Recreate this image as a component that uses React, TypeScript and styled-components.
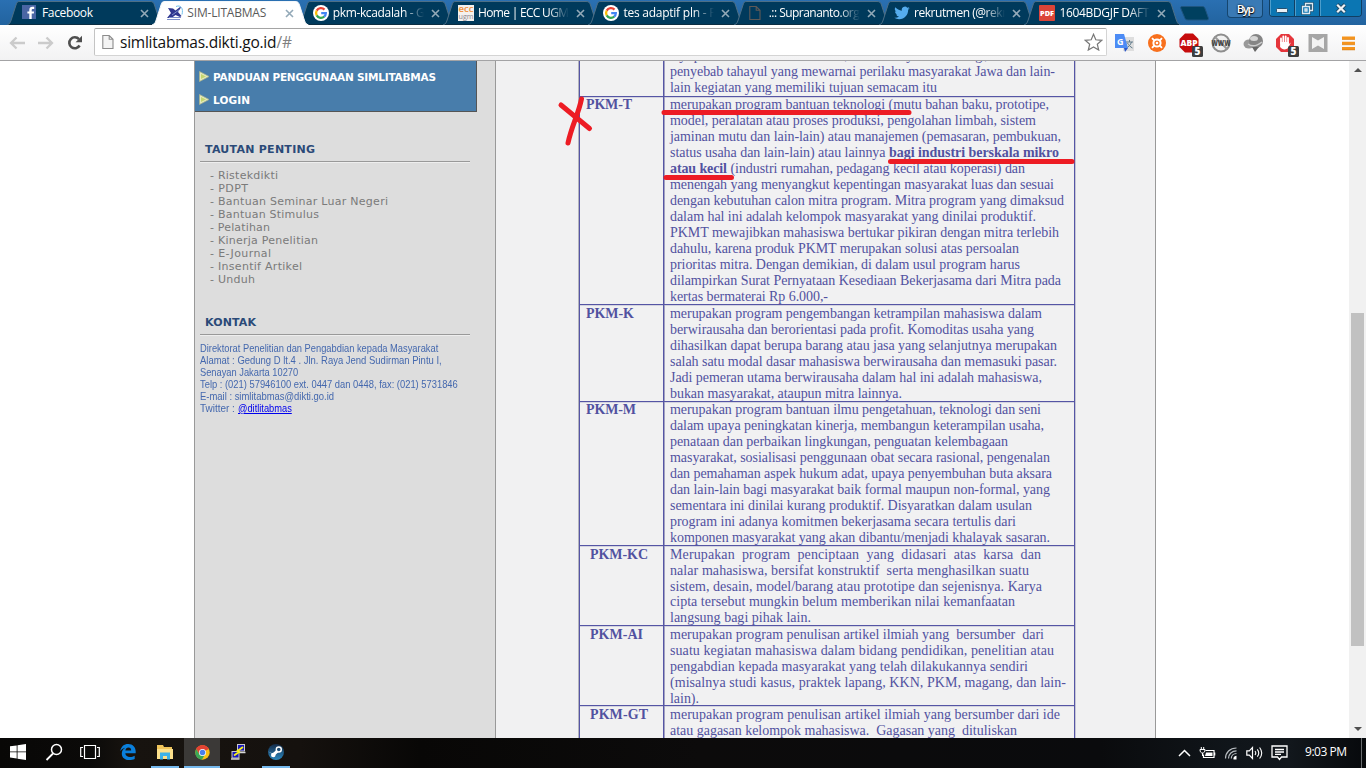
import React, { useLayoutEffect, useRef, useState } from "react";
import styled, { createGlobalStyle } from "styled-components";

const GlobalStyle = createGlobalStyle`
  * { box-sizing: border-box; }
  html, body { margin: 0; padding: 0; overflow: hidden; background: #fff; }
  svg { display: block; }
`;

/* ---------- text set to a fixed measure ---------- */

const Measure = styled.span<{ $w: number; $bold?: boolean }>`
  display: inline-block;
  width: ${(p) => p.$w}px;
  white-space: pre;
  font-weight: ${(p) => (p.$bold ? 700 : "inherit")};
`;

function Fit({ text, w, bold }: { text: string; w: number; bold?: boolean }) {
  const ref = useRef<HTMLSpanElement>(null);
  const [gap, setGap] = useState(0);
  useLayoutEffect(() => {
    if (!ref.current) return;
    const natural = ref.current.getBoundingClientRect().width;
    setGap((w - natural) / Math.max(1, text.length - 1));
  }, [text, w]);
  return (
    <Measure $w={w} $bold={bold}>
      <span ref={ref} style={{ letterSpacing: gap }}>{text}</span>
    </Measure>
  );
}

const CondensedText = styled.span`
  display: inline-block;
  transform-origin: 0 50%;
`;

function Condensed({ text, w }: { text: string; w: number }) {
  const ref = useRef<HTMLSpanElement>(null);
  const [scale, setScale] = useState(1);
  useLayoutEffect(() => {
    if (ref.current) setScale(w / ref.current.offsetWidth);
  }, [text, w]);
  return (
    <Measure $w={w}>
      <CondensedText ref={ref} style={{ transform: `scaleX(${scale})` }}>{text}</CondensedText>
    </Measure>
  );
}

/* ---------- window ---------- */

const Screen = styled.div`
  width: 1366px;
  height: 768px;
  display: flex;
  flex-direction: column;
  overflow: hidden;
  background: #fff;
`;

const TabStrip = styled.div`
  height: 25px;
  flex: none;
  display: flex;
  padding-left: 7px;
  background: linear-gradient(#2a70b2, #22639f);
  font: 12px "Open Sans", "Noto Sans", sans-serif;
`;

const TabBox = styled.div<{ $active?: boolean }>`
  position: relative;
  z-index: ${(p) => (p.$active ? 2 : 1)};
  width: 145.35px;
  height: 25px;
  flex: none;
  display: flex;
  align-items: center;
  padding: 1px 0 0 15px;
  color: ${(p) => (p.$active ? "#5a5a5a" : "#fff")};
`;

const TabShape = styled.svg`
  position: absolute;
  left: 0;
  top: 0;
  z-index: -1;
`;

const TabTitle = styled.div<{ $fade: boolean }>`
  width: 94px;
  margin-left: 4px;
  overflow: hidden;
  white-space: nowrap;
  line-height: 18px;
  mask-image: ${(p) => (p.$fade ? "linear-gradient(90deg, #000 70px, transparent 91px)" : "none")};
`;

const Favicon = styled.div`
  width: 16px;
  height: 16px;
  flex: none;
`;

const CloseGlyph = styled.svg`
  flex: none;
  margin-left: 4px;
`;

const NewTab = styled.svg`
  flex: none;
  margin: 5px 0 0 8px;
`;

const WindowButtons = styled.div`
  display: flex;
  margin-left: auto;
  padding-right: 4px;
`;

const UserButton = styled.div`
  width: 36px;
  height: 18px;
  margin-right: 6px;
  border: 1px solid #15466f;
  border-top: 0;
  border-radius: 0 0 4px 4px;
  background: #3a7ab5;
  color: #fff;
  text-align: center;
  line-height: 18px;
  font-size: 11.5px;
  font-weight: 600;
  text-shadow: 0 0 2px #000, 0 1px 1px #000;
`;

const ButtonGroup = styled.div`
  display: flex;
  height: 17px;
  border: 1px solid #103f63;
  border-top: 0;
  border-radius: 0 0 4px 4px;
  overflow: hidden;
`;

const WinButton = styled.div<{ $w: number; $drop?: number }>`
  width: ${(p) => p.$w}px;
  padding-top: ${(p) => p.$drop ?? 0}px;
  display: flex;
  align-items: center;
  justify-content: center;
  background: #0b76b3;
  border-right: 1px solid #103f63;
  box-shadow: inset 1px 0 #4c9dcb;
  &:last-child { border-right: 0; }
`;

const Toolbar = styled.div`
  position: relative;
  z-index: 3;
  height: 36px;
  flex: none;
  display: flex;
  align-items: center;
  padding-left: 9px;
  background: linear-gradient(#fff, #f2f2f3);
  border-bottom: 1px solid #a3a3a5;
`;

const NavIcon = styled.svg<{ $gap?: number }>`
  flex: none;
  margin-right: ${(p) => p.$gap ?? 13}px;
`;

const Omnibox = styled.div`
  width: 1013px;
  height: 28px;
  margin-top: -1px;
  display: flex;
  align-items: center;
  padding: 0 3px 0 7px;
  border: 1px solid #d4d4d4;
  border-top-color: #a4a4a4;
  border-left-color: #c4c4c4;
  border-radius: 2px;
  background: #fff;
  font: 15.5px "Open Sans", "Noto Sans", sans-serif;
  color: #111;
`;

const Address = styled.div`
  flex: 1;
  padding-left: 6px;
  line-height: 22px;
`;

const Muted = styled.span`
  color: #808080;
`;

const Extensions = styled.div`
  flex: 1;
  display: flex;
  align-items: center;
  padding-left: 6px;
  gap: 10.3px;
  svg { overflow: visible; flex: none; }
`;

/* ---------- page ---------- */

const Viewport = styled.div`
  height: 677px;
  flex: none;
  display: flex;
  overflow: hidden;
  background: #fff;
`;

const Page = styled.div`
  width: 962px;
  margin-left: 194px;
  display: flex;
  border-left: 1px solid #999;
  border-right: 1px solid #999;
  background: #f1f1f2;
`;

const Sidebar = styled.div`
  width: 301px;
  flex: none;
  background: #ddd;
  border-right: 1px solid #999;
`;

const Menu = styled.div`
  width: 282px;
  height: 51px;
  padding: 4px 0 0 4px;
  background: #487dab;
  border: 1px solid #555;
  border-top: 0;
  border-left: 0;
  font: 700 10.5px "DejaVu Sans", sans-serif;
  color: #fff;
`;

const MenuItem = styled.div`
  height: 23px;
  display: flex;
  align-items: center;
  gap: 4px;
`;

const Heading = styled.div<{ $top: number }>`
  margin: ${(p) => p.$top}px 25px 0 5px;
  height: 19px;
  padding-left: 5px;
  font: 700 11px/14px "DejaVu Sans", sans-serif;
  color: #2b4a78;
  border-bottom: 1px solid #999;
  box-shadow: 0 1px #eee;
`;

const Links = styled.div`
  margin: 7px 0 0 15px;
  font: 11px/13px "DejaVu Sans", sans-serif;
  color: #7a7a7a;
`;

const Contact = styled.div`
  margin: 7px 0 0 5px;
  font: 11px/12px "Liberation Sans", sans-serif;
  color: #4468ae;
`;

const Handle = styled.span`
  color: #0000ee;
  span span { text-decoration: underline; }
`;

const ContactLine = styled.div`
  height: 12px;
  white-space: nowrap;
`;

const LinkLine = styled.div`
  height: 13px;
  white-space: nowrap;
`;

const Main = styled.div`
  position: relative;
  flex: 1;
  overflow: hidden;
  padding-left: 83px;
`;

const Table = styled.div`
  width: 496px;
  margin-top: -13px;
  border-left: 1px solid #5555a5;
  border-right: 1px solid #5555a5;
  box-shadow: -1px 0 #b4b4bd, 1px 0 #c6c6d4;
  font: 14px "Liberation Serif", serif;
  color: #5151a0;
`;

const TRow = styled.div<{ $h: number }>`
  display: flex;
  height: ${(p) => p.$h}px;
  border-bottom: 1px solid #5555a5;
  box-shadow: 0 1px #d3d3df;
`;

const LabelCell = styled.div<{ $indent: number; $pad: number }>`
  width: 84px;
  flex: none;
  padding: ${(p) => p.$pad}px 0 0 ${(p) => p.$indent}px;
  line-height: 16px;
  border-right: 1px solid #5555a5;
  box-shadow: 1px 0 #a2a2c0;
`;

const TextCell = styled.div<{ $lh: number; $pad: number }>`
  padding: ${(p) => p.$pad}px 0 0 6px;
  line-height: ${(p) => p.$lh}px;
  & > div { height: ${(p) => p.$lh}px; white-space: nowrap; }
`;

const Marks = styled.svg`
  position: absolute;
  left: 0;
  top: 0;
  pointer-events: none;
`;

const ScrollTrack = styled.div`
  width: 17px;
  margin-left: auto;
  display: flex;
  flex-direction: column;
  align-items: center;
  padding: 7px 0;
  background: #f1f1f1;
`;

const ScrollThumb = styled.div`
  width: 13px;
  height: 333px;
  margin: 241px 0 auto;
  background: #c1c1c1;
`;

/* ---------- taskbar ---------- */

const Taskbar = styled.div`
  height: 30px;
  flex: none;
  display: flex;
  background: linear-gradient(90deg, #080706 0, #0b0a09 90px, #17130f 130px, #15110e 300px, #080706 420px, #0c0b0b 700px, #0a0b0d 1100px, #10151a 1230px, #12171c 1290px, #07090c 1366px);
`;

const TaskItem = styled.div<{ $w: number; $open?: boolean; $focus?: boolean }>`
  width: ${(p) => p.$w}px;
  height: 30px;
  flex: none;
  display: flex;
  align-items: center;
  justify-content: center;
  background: ${(p) => (p.$focus ? "#3b3937" : "transparent")};
  border-bottom: 2px solid ${(p) => (p.$open ? "#76b9ed" : "transparent")};
`;

const Spacer = styled.div<{ $w: number }>`
  width: ${(p) => p.$w}px;
  flex: none;
`;

const Tray = styled.div`
  margin-left: auto;
  display: flex;
  align-items: center;
  padding-right: 4px;
  color: #fff;
  font: 12px "Open Sans", "Noto Sans", sans-serif;
`;

const TrayIcon = styled.svg<{ $gap?: number }>`
  flex: none;
  margin-right: ${(p) => p.$gap ?? 8}px;
`;

const Clock = styled.div`
  padding-bottom: 3px;
`;

const DesktopEdge = styled.div`
  width: 1px;
  height: 30px;
  margin-left: 14px;
  background: #686b6e;
`;

/* ---------- icons ---------- */

const GoogleIcon = () => (
  <svg width="16" height="16" viewBox="0 0 16 16">
    <circle cx="8" cy="8" r="8" fill="#fff" />
    <g fill="none" strokeWidth="2.3">
      <path d="M11.5 4.6A4.9 4.9 0 0 0 3.7 5.6" stroke="#ea4335" />
      <path d="M3.7 5.6a4.9 4.9 0 0 0 0 4.8" stroke="#fbbc05" />
      <path d="M3.7 10.4a4.9 4.9 0 0 0 7.6 1.1" stroke="#34a853" />
      <path d="M11.2 11.6A4.7 4.7 0 0 0 12.8 8.2H8.2" stroke="#4285f4" />
    </g>
  </svg>
);

const FacebookIcon = () => (
  <svg width="14" height="14" viewBox="0 0 14 14">
    <rect width="14" height="14" fill="#4a66a4" />
    <path d="M7.3 14V8.6H5.4V6.4h1.9V4.9c0-2 1.2-3.1 3-3.1h1.9V4h-1.3c-.9 0-1.2.4-1.2 1.2v1.2h2.4l-.3 2.2H9.7V14z" fill="#fff" />
  </svg>
);

const SimIcon = () => (
  <svg width="16" height="16" viewBox="0 0 16 16">
    <path d="M1 3l5 .5 2.500 2L13 2l1 .5L11 7l3.500 4-1.500 1-4.500-2-4 3H0l4-5z" fill="#30378f" />
    <path d="M0 14.500h13M2 12.500h12M5 10l7-5" stroke="#7c8fcb" fill="none" />
    <path d="M9 1.500c5-2 7.500 2 6 8" stroke="#6fbfea" fill="none" />
  </svg>
);

const EccIcon = () => (
  <svg width="16" height="16" viewBox="0 0 16 16">
    <rect width="16" height="16" fill="#f4f1ee" />
    <text x="0.5" y="7" fontFamily="Open Sans, sans-serif" fontSize="9" fontWeight="600" fill="#f0913c" textLength="15" lengthAdjust="spacingAndGlyphs">ecc</text>
    <text x="0.5" y="13.800" fontFamily="Open Sans, sans-serif" fontSize="7.5" fill="#8b8790" textLength="15" lengthAdjust="spacingAndGlyphs">ugm</text>
  </svg>
);

const PageIcon = ({ dark }: { dark?: boolean }) => (
  <svg width="12" height="16" viewBox="0 0 12 16">
    <path d="M.8 1.5h6.4L11 5.3v9.2H.8zM7.2 1.5v3.8H11" fill={dark ? "none" : "#f4f4f4"} stroke={dark ? "#5f5a57" : "#8c8c8c"} strokeWidth="1.1" />
  </svg>
);

const TwitterIcon = () => (
  <svg width="16" height="16" viewBox="0 0 24 24">
    <path d="M23.6 4.9a9.700 9.700 0 0 1-2.700.8 4.700 4.700 0 0 0 2-2.600c-.9.500-1.900.9-3 1.100a4.700 4.700 0 0 0-8.100 4.300C7.900 8.300 4.400 6.400 2 3.500a4.700 4.700 0 0 0 1.500 6.300c-.8 0-1.500-.2-2.100-.6 0 2.300 1.600 4.200 3.800 4.700-.7.200-1.400.2-2.100.1a4.700 4.700 0 0 0 4.400 3.300A9.500 9.500 0 0 1 .4 19.200a13.400 13.400 0 0 0 7.300 2.100c8.700 0 13.800-7.400 13.500-14.000.9-.7 1.700-1.500 2.400-2.400z" fill="#55acee" />
  </svg>
);

const PdfIcon = () => (
  <svg width="16" height="16" viewBox="0 0 16 16">
    <rect width="16" height="16" rx="1" fill="#db4437" />
    <text x="1" y="11" fontFamily="Open Sans, sans-serif" fontSize="7.5" fontWeight="800" fill="#fff" textLength="14" lengthAdjust="spacingAndGlyphs">PDF</text>
  </svg>
);

const Close = () => (
  <CloseGlyph width="9" height="9" viewBox="0 0 9 9">
    <path d="M1 1l7 7M8 1L1 8" stroke="#93a9b8" strokeWidth="1.6" />
  </CloseGlyph>
);

type TabData = { icon: React.ReactNode; title: string; w: number; active?: boolean; fade?: boolean };

const tabs: TabData[] = [
  { icon: <FacebookIcon />, title: "Facebook", w: 51 },
  { icon: <SimIcon />, title: "SIM-LITABMAS", w: 79, active: true },
  { icon: <GoogleIcon />, title: "pkm-kcadalah - G", w: 92, fade: true },
  { icon: <EccIcon />, title: "Home | ECC UGM", w: 91, fade: true },
  { icon: <GoogleIcon />, title: "tes adaptif pln - P", w: 93, fade: true },
  { icon: <PageIcon dark />, title: ".:: Suprananto.org", w: 91, fade: true },
  { icon: <TwitterIcon />, title: "rekrutmen (@rekr", w: 93, fade: true },
  { icon: <PdfIcon />, title: "1604BDGJF DAFT", w: 90, fade: true },
];

const Tab = ({ icon, title, w, active, fade }: TabData) => (
  <TabBox $active={active}>
    <TabShape width="158" height="25" viewBox="0 0 158 25">
      <path
        d="M0 25C3 24 3.500 22 4.500 19L9 5C10 2 10.500 1.500 13 1.500H143C146 1.500 146.500 2.500 147.500 5L152 19C153 22 153.500 24 156.500 25"
        fill={active ? "#fff" : "#003a5c"}
        stroke={active ? "#f4f7fa" : "#4d6f86"}
      />
      {!active && <path d="M2 24.500H155" stroke="#0b2d42" />}
    </TabShape>
    <Favicon>{icon}</Favicon>
    <TabTitle $fade={!!fade}><Fit text={title} w={w} /></TabTitle>
    <Close />
  </TabBox>
);

const Badge = ({ x, y }: { x: number; y: number }) => (
  <g transform={`translate(${x} ${y})`}>
    <rect width="11" height="11" rx="1.500" fill="#3e3e3e" />
    <text x="2.600" y="9" fontFamily="Open Sans, sans-serif" fontSize="10" fontWeight="800" fill="#fff">5</text>
  </g>
);

const ExtensionIcons = () => (
  <Extensions>
    <svg width="22" height="22" viewBox="0 0 22 22">
      <rect x="10" y="5" width="11" height="14" fill="#dedede" />
      <path d="M13 10h7M16.500 8v2M18.500 10c-1 3-3 5-5 6M14.500 11c1 2 3 4 5 5" stroke="#607b8b" fill="none" />
      <path d="M2 2h9l4 14H2z" fill="#4c8bf5" />
      <path d="M11 16h4l-3 4z" fill="#2a56c6" />
      <text x="4" y="12.500" fontFamily="Open Sans, sans-serif" fontSize="9" fontWeight="700" fill="#fff">G</text>
    </svg>
    <svg width="22" height="22" viewBox="0 0 22 22">
      <circle cx="12" cy="11" r="9" fill="#f8701d" />
      <circle cx="12" cy="11" r="3.600" fill="none" stroke="#fff" strokeWidth="2" />
      <circle cx="12" cy="11" r="1.300" fill="#fff" />
      <path d="M7 6.200l2.300 2.300M17 6.200l-2.300 2.300M7 15.800l2.300-2.300M17 15.800l-2.300-2.300" stroke="#fff" strokeWidth="1.800" />
    </svg>
    <svg width="22" height="22" viewBox="0 0 22 22">
      <path d="M7 1.500h8l5.500 5.500v8L15 20.500H7L1.500 15V7z" fill="#c60c0d" />
      <text x="2.500" y="13.700" fontFamily="Open Sans, sans-serif" fontSize="9" fontWeight="800" fill="#fff" textLength="17" lengthAdjust="spacingAndGlyphs">ABP</text>
      <Badge x={14} y={14} />
    </svg>
    <svg width="22" height="22" viewBox="0 0 22 22">
      <circle cx="11" cy="11" r="8.500" fill="#f1f1f1" stroke="#8e8e8e" strokeWidth="2" />
      <path d="M5 5l12 12" stroke="#9a9a9a" strokeWidth="2" />
      <text x="1.500" y="14" fontFamily="Open Sans, sans-serif" fontSize="9" fontWeight="800" fill="#444" textLength="19" lengthAdjust="spacingAndGlyphs">WWW</text>
    </svg>
    <svg width="22" height="22" viewBox="0 0 22 22">
      <ellipse cx="7" cy="12" rx="5.500" ry="4.500" fill="#999" />
      <circle cx="14" cy="9" r="7" fill="#858585" />
      <ellipse cx="12" cy="6.500" rx="4" ry="2.500" fill="#d6d6d6" />
      <path d="M6 12c4 3 9 2 14-2" stroke="#ccc" strokeWidth="1.500" fill="none" />
      <path d="M10 15h7l-4 5z" fill="#666" />
    </svg>
    <svg width="22" height="22" viewBox="0 0 22 22">
      <path d="M7 2h8l5 5v8l-5 5H7l-5-5V7z" fill="#e5363c" />
      <path d="M7 11V6.500M9.300 10V4.500M11.700 10V4.500M14 11V6" stroke="#fff" strokeWidth="1.800" strokeLinecap="round" />
      <path d="M6.100 10h8.800v2l2-1.500-2.800 5.500c-2 2-6 2-8-1z" fill="#fff" />
      <Badge x={14} y={14} />
    </svg>
    <svg width="22" height="22" viewBox="0 0 22 22">
      <rect x="1.500" y="2" width="19" height="18" fill="#a6a6a6" />
      <path d="M5 5l6 3.500L17 5v12l-6-3.500L5 17z" fill="#f2f2f2" />
    </svg>
    <svg width="20" height="22" viewBox="0 0 20 22">
      <path d="M3 6h13M3 11.200h13M3 16.400h13" stroke="#f5941d" strokeWidth="3" />
      <path d="M3 7.500h13M3 12.700h13M3 17.900h13" stroke="#d97e12" strokeWidth=".6" />
    </svg>
  </Extensions>
);

const Arrow = () => (
  <svg width="10" height="11" viewBox="0 0 10 11">
    <path d="M.5.5v10L10 5.500z" fill="#e6ecbf" stroke="#a9b38c" strokeWidth=".8" />
    <path d="M2 3v5l5-2.500z" fill="#c4d670" />
  </svg>
);

const Chrome = () => (
  <svg width="15" height="15" viewBox="0 0 15 15">
    <circle cx="7.500" cy="7.500" r="7.200" fill="#fbc116" />
    <path d="M7.500 7.500L1.200 3.900A7.200 7.200 0 0 1 13.800 3.900z" fill="#e24233" />
    <path d="M7.500 4h6.300A7.200 7.200 0 0 0 1.200 4l3.200 5.300z" fill="#e24233" />
    <path d="M1.200 4a7.200 7.200 0 0 0 5.700 10.700L10 9.500H4.500z" fill="#3aa757" />
    <circle cx="7.500" cy="7.500" r="3.500" fill="#fff" />
    <circle cx="7.500" cy="7.500" r="2.800" fill="#4a80ee" />
  </svg>
);

/* ---------- content ---------- */

type Seg = [string, number, boolean?];
type RowData = { label: string; lw?: number; indent: number; h: number; lh: number; pad: number; lines: Seg[][] };

const rows: RowData[] = [
  {
    label: "", indent: 6, h: 49, lh: 16, pad: 0,
    lines: [
      [["raya pikir dan cara-cara di masa lalu, tradisi budaya atau mitologi,", 318]],
      [["penyebab tahayul yang mewarnai perilaku masyarakat Jawa dan lain-", 385]],
      [["lain kegiatan yang memiliki tujuan semacam itu", 267]],
    ],
  },
  {
    label: "PKM-T", lw: 46, indent: 6, h: 208, lh: 15.96, pad: 0.4,
    lines: [
      [["merupakan program bantuan teknologi (mutu bahan baku, prototipe,", 379]],
      [["model, peralatan atau proses produksi, pengolahan limbah, sistem", 366]],
      [["jaminan mutu dan lain-lain) atau manajemen (pemasaran, pembukuan,", 391]],
      [["status usaha dan lain-lain) atau lainnya ", 219], ["bagi industri berskala mikro", 170, true]],
      [["atau kecil", 57, true], [" (industri rumahan, pedagang kecil atau koperasi) dan", 298]],
      [["menengah yang menyangkut kepentingan masyarakat luas dan sesuai", 384]],
      [["dengan kebutuhan calon mitra program. Mitra program yang dimaksud", 394]],
      [["dalam hal ini adalah kelompok masyarakat yang dinilai produktif.", 366]],
      [["PKMT mewajibkan mahasiswa bertukar pikiran dengan mitra terlebih", 389]],
      [["dahulu, karena produk PKMT merupakan solusi atas persoalan", 349]],
      [["prioritas mitra. Dengan demikian, di dalam usul program harus", 350]],
      [["dilampirkan Surat Pernyataan Kesediaan Bekerjasama dari Mitra pada", 391]],
      [["kertas bermaterai Rp 6.000,-", 158]],
    ],
  },
  {
    label: "PKM-K", lw: 48, indent: 6, h: 97, lh: 16, pad: 1,
    lines: [
      [["merupakan program pengembangan ketrampilan mahasiswa dalam", 372]],
      [["berwirausaha dan berorientasi pada profit. Komoditas usaha yang", 364]],
      [["dihasilkan dapat berupa barang atau jasa yang selanjutnya merupakan", 387]],
      [["salah satu modal dasar mahasiswa berwirausaha dan memasuki pasar.", 387]],
      [["Jadi pemeran utama berwirausaha dalam hal ini adalah mahasiswa,", 372]],
      [["bukan masyarakat, ataupun mitra lainnya.", 232]],
    ],
  },
  {
    label: "PKM-M", lw: 50, indent: 6, h: 144, lh: 15.97, pad: 0,
    lines: [
      [["merupakan program bantuan ilmu pengetahuan, teknologi dan seni", 371]],
      [["dalam upaya peningkatan kinerja, membangun keterampilan usaha,", 374]],
      [["penataan dan perbaikan lingkungan, penguatan kelembagaan", 338]],
      [["masyarakat, sosialisasi penggunaan obat secara rasional, pengenalan", 380]],
      [["dan pemahaman aspek hukum adat, upaya penyembuhan buta aksara", 382]],
      [["dan lain-lain bagi masyarakat baik formal maupun non-formal, yang", 380]],
      [["sementara ini dinilai kurang produktif. Disyaratkan dalam usulan", 362]],
      [["program ini adanya komitmen bekerjasama secara tertulis dari", 346]],
      [["komponen masyarakat yang akan dibantu/menjadi khalayak sasaran.", 380]],
    ],
  },
  {
    label: "PKM-KC", lw: 58, indent: 10, h: 80, lh: 15.9, pad: 0.8,
    lines: [
      [["Merupakan  program  penciptaan  yang  didasari  atas  karsa  dan", 371]],
      [["nalar mahasiswa, bersifat konstruktif  serta menghasilkan suatu", 359]],
      [["sistem, desain, model/barang atau prototipe dan sejenisnya. Karya", 372]],
      [["cipta tersebut mungkin belum memberikan nilai kemanfaatan", 345]],
      [["langsung bagi pihak lain.", 141]],
    ],
  },
  {
    label: "PKM-AI", lw: 53, indent: 10, h: 80, lh: 16, pad: 1,
    lines: [
      [["merupakan program penulisan artikel ilmiah yang  bersumber  dari", 374]],
      [["suatu kegiatan mahasiswa dalam bidang pendidikan, penelitian atau", 384]],
      [["pengabdian kepada masyarakat yang telah dilakukannya sendiri", 358]],
      [["(misalnya studi kasus, praktek lapang, KKN, PKM, magang, dan lain-", 396]],
      [["lain).", 29]],
    ],
  },
  {
    label: "PKM-GT", lw: 58, indent: 10, h: 80, lh: 16, pad: 1,
    lines: [
      [["merupakan program penulisan artikel ilmiah yang bersumber dari ide", 390]],
      [["atau gagasan kelompok mahasiswa.  Gagasan yang  dituliskan", 347]],
    ],
  },
];

const links: [string, number][] = [
  ["- Ristekdikti", 68],
  ["- PDPT", 38],
  ["- Bantuan Seminar Luar Negeri", 178],
  ["- Bantuan Stimulus", 109],
  ["- Pelatihan", 60],
  ["- Kinerja Penelitian", 108],
  ["- E-Journal", 61],
  ["- Insentif Artikel", 92],
  ["- Unduh", 45],
];

const contact: [string, number][] = [
  ["Direktorat Penelitian dan Pengabdian kepada Masyarakat", 238],
  ["Alamat : Gedung D lt.4 . Jln. Raya Jend Sudirman Pintu I,", 242],
  ["Senayan Jakarta 10270", 98],
  ["Telp : (021) 57946100 ext. 0447 dan 0448, fax: (021) 5731846", 258],
  ["E-mail : simlitabmas@dikti.go.id", 134],
];

export default function App() {
  return (
    <Screen>
      <GlobalStyle />
      <TabStrip>
        {tabs.map((t) => <Tab key={t.title} {...t} />)}
        <NewTab width="34" height="17" viewBox="0 0 34 17">
          <path d="M4 1.500h20c2 0 2.600.8 3.200 2.500l3 8.500c.6 1.700 0 2.500-1.700 2.500H10c-2 0-2.800-.8-3.400-2.500L3 4C2.400 2.200 2.600 1.500 4 1.500z" fill="#00405f" stroke="#1f5580" />
        </NewTab>
        <WindowButtons>
          <UserButton><Fit text="Byp" w={18} /></UserButton>
          <ButtonGroup>
            <WinButton $w={25} $drop={4}>
              <svg width="12" height="6" viewBox="0 0 12 6"><rect x=".5" y="1.500" width="11" height="4" rx="1" fill="#e8f1f7" stroke="#24506f" /></svg>
            </WinButton>
            <WinButton $w={25}>
              <svg width="13" height="13" viewBox="0 0 13 13">
                <path d="M4.500 1.500h7v7h-7zM1.500 4.500h7v7h-7z" fill="#0b76b3" stroke="#1d4a68" strokeWidth="2.600" />
                <path d="M4.500 1.500h7v7h-7z" fill="none" stroke="#dfeaf2" strokeWidth="1.300" />
                <path d="M1.500 4.500h7v7h-7zM4 7h2v2H4z" fill="#0b76b3" stroke="#dfeaf2" strokeWidth="1.300" />
              </svg>
            </WinButton>
            <WinButton $w={41}>
              <svg width="12" height="11" viewBox="0 0 12 11">
                <path d="M2 1.500l8 8M10 1.500l-8 8" stroke="#1d4a68" strokeWidth="4" />
                <path d="M2.200 1.700l7.600 7.600M9.800 1.700L2.200 9.300" stroke="#edf3f7" strokeWidth="2.200" />
              </svg>
            </WinButton>
          </ButtonGroup>
        </WindowButtons>
      </TabStrip>

      <Toolbar>
        <NavIcon width="16" height="14" viewBox="0 0 16 14">
          <path d="M7.500 1.500L2 7l5.500 5.500M2 7h14" fill="none" stroke="#cbcbcb" strokeWidth="2.300" />
        </NavIcon>
        <NavIcon width="16" height="14" viewBox="0 0 16 14">
          <path d="M8.500 1.500L14 7l-5.500 5.500M14 7H0" fill="none" stroke="#cbcbcb" strokeWidth="2.300" />
        </NavIcon>
        <NavIcon width="16" height="16" viewBox="0 0 16 16" $gap={11}>
          <path d="M12.600 10.500A5.500 5.500 0 1 1 12 4.200" fill="none" stroke="#4f4f4f" strokeWidth="2.600" />
          <path d="M15 .8v6.400H8.600z" fill="#4f4f4f" />
        </NavIcon>
        <Omnibox>
          <PageIcon />
          <Address>
            <Fit text="simlitabmas.dikti.go.id" w={156.5} />
            <Muted><Fit text="/#" w={15.5} /></Muted>
          </Address>
          <svg width="19" height="18" viewBox="0 0 19 18">
            <path d="M9.500 1.300l2.300 5.500 6 .5-4.500 3.900 1.400 5.800-5.200-3.100L4.300 17l1.400-5.800L1.200 7.300l6-.5z" fill="#fff" stroke="#777" strokeWidth="1.200" />
          </svg>
        </Omnibox>
        <ExtensionIcons />
      </Toolbar>

      <Viewport>
        <Page>
          <Sidebar>
            <Menu>
              <MenuItem><Arrow /><Fit text="PANDUAN PENGGUNAAN SIMLITABMAS" w={223} /></MenuItem>
              <MenuItem><Arrow /><Fit text="LOGIN" w={37} /></MenuItem>
            </Menu>
            <Heading $top={31}><Fit text="TAUTAN PENTING" w={110} /></Heading>
            <Links>
              {links.map(([t, w]) => <LinkLine key={t}><Fit text={t} w={w} /></LinkLine>)}
            </Links>
            <Heading $top={30}><Fit text="KONTAK" w={51} /></Heading>
            <Contact>
              {contact.map(([t, w]) => <ContactLine key={t}><Condensed text={t} w={w} /></ContactLine>)}
              <ContactLine><Condensed text="Twitter : " w={38} /><Handle><Condensed text="@ditlitabmas" w={54} /></Handle></ContactLine>
            </Contact>
          </Sidebar>
          <Main>
            <Table>
              {rows.map((r) => (
                <TRow key={r.label} $h={r.h}>
                  <LabelCell $indent={r.indent} $pad={r.pad}>
                    {r.label && <Fit text={r.label} w={r.lw!} bold />}
                  </LabelCell>
                  <TextCell $lh={r.lh} $pad={r.pad}>
                    {r.lines.map((line, i) => (
                      <div key={i}>
                        {line.map(([t, w, b]) => <Fit key={t} text={t} w={w} bold={b} />)}
                      </div>
                    ))}
                  </TextCell>
                </TRow>
              ))}
            </Table>
            <Marks width="659" height="120" viewBox="496 61 659 120">
              <g stroke="#ed1c24" strokeWidth="5" strokeLinecap="round">
                <path d="M664 112.500H909M890.500 161.500H1072M666 177.500H731.500" />
                <path d="M561 105l28.500 23.500M581.500 99c-3 15-10 27-13.500 44" fill="none" />
              </g>
            </Marks>
          </Main>
        </Page>
        <ScrollTrack>
          <svg width="8" height="4" viewBox="0 0 8 4"><path d="M0 4l4-4 4 4z" fill="#505050" /></svg>
          <ScrollThumb />
          <svg width="8" height="4" viewBox="0 0 8 4"><path d="M0 0l4 4 4-4z" fill="#505050" /></svg>
        </ScrollTrack>
      </Viewport>

      <Taskbar>
        <TaskItem $w={36}>
          <svg width="16" height="16" viewBox="0 0 16 16"><path d="M0 2.300l6.700-.9v6.100H0zM7.500 1.300L16 0v7.500H7.500zM0 8.300h6.700v6.100L0 13.500zM7.500 8.300H16V16l-8.500-1.300z" fill="#fff" /></svg>
        </TaskItem>
        <TaskItem $w={36}>
          <svg width="18" height="18" viewBox="0 0 18 18"><circle cx="11.500" cy="6.500" r="5" fill="none" stroke="#fff" strokeWidth="1.500" /><path d="M8 10.500L1.500 17" stroke="#fff" strokeWidth="1.800" /></svg>
        </TaskItem>
        <TaskItem $w={36}>
          <svg width="20" height="16" viewBox="0 0 20 16"><path d="M4.500 1.500h11v13h-11zM3 3.500H.7v9H3M17 3.500h2.300v9H17" fill="none" stroke="#fff" strokeWidth="1.200" /></svg>
        </TaskItem>
        <TaskItem $w={39}>
          <svg width="16" height="16" viewBox="0 0 16 16"><path d="M.3 7.200C.9 2.600 4 0 8.200 0c4.700 0 7.500 3.300 7.500 7.600v1.700H5.300c.2 2.600 2.300 3.700 4.700 3.700 1.800 0 3.300-.5 4.700-1.300v3.200c-1.500.8-3.400 1.100-5.300 1.100-4.600 0-7.600-2.500-7.600-6.600 0-2.500 1.300-4.600 3.500-5.700C3 4.300 1.300 5.300.3 7.200zM5.400 6.500h5.800c0-1.900-1-2.900-2.700-2.900S5.700 4.700 5.400 6.500z" fill="#0a7fdc" /></svg>
        </TaskItem>
        <Spacer $w={4} />
        <TaskItem $w={28} $open>
          <svg width="18" height="16" viewBox="0 0 18 16">
            <path d="M1 1h6l1 2h8v12H1z" fill="#efc45a" /><path d="M1 5h16v10H1z" fill="#fce08b" />
            <path d="M4 15.500V8.500h10v7h-3v-3.500H7v3.500z" fill="#3cb2e8" />
          </svg>
        </TaskItem>
        <Spacer $w={5} />
        <TaskItem $w={36} $open $focus><Chrome /></TaskItem>
        <TaskItem $w={36}>
          <svg width="15" height="16" viewBox="0 0 15 16">
            <rect x="6.500" y=".5" width="7" height="6.500" fill="#1717bd" stroke="#c9c9c9" /><path d="M7 8.500h7.500" stroke="#d6d6d6" strokeWidth="1.500" />
            <rect x="1" y="7.500" width="7" height="6.500" fill="#1717bd" stroke="#c9c9c9" /><path d="M0 15h8.500" stroke="#d6d6d6" strokeWidth="1.500" />
            <path d="M12 3L6.500 7l1.500 1L3 11.500" fill="none" stroke="#f6f01c" strokeWidth="1.800" />
          </svg>
        </TaskItem>
        <Spacer $w={6} />
        <TaskItem $w={28} $open>
          <svg width="16" height="16" viewBox="0 0 16 16">
            <defs><linearGradient id="st" x1="0" y1="0" x2="0" y2="1"><stop offset="0" stopColor="#152b49" /><stop offset="1" stopColor="#2986bd" /></linearGradient></defs>
            <circle cx="8" cy="8" r="8" fill="url(#st)" />
            <circle cx="10.800" cy="5.500" r="2.500" fill="none" stroke="#fff" strokeWidth="1.400" />
            <path d="M0 7.500l4.500 2 3.800-3.500 2 2.200-3.300 3" fill="#fff" />
            <circle cx="5.300" cy="11" r="2.300" fill="#fff" />
          </svg>
        </TaskItem>
        <Tray>
          <TrayIcon width="13" height="8" viewBox="0 0 13 8"><path d="M1 7l5.500-5.500L12 7" fill="none" stroke="#fff" strokeWidth="1.500" /></TrayIcon>
          <TrayIcon width="17" height="14" viewBox="0 0 17 14">
            <path d="M6.500 4.500h8.500v7H4.500V8.500M15.700 6.500v3" fill="none" stroke="#fff" strokeWidth="1.200" />
            <path d="M7 6.500h6.500v3.500H6z" fill="#fff" />
            <path d="M2.300 1v2M4.700 1v2M1 3.500h5c0 2.500-1 3.500-2.500 3.500S1 6 1 3.500zM3.500 7v3" fill="none" stroke="#fff" />
          </TrayIcon>
          <TrayIcon width="14" height="14" viewBox="0 0 14 14">
            <path d="M1.500 12.500C1.500 6.500 6 2 12.500 2M4.500 12.500c0-4.500 3.500-7.700 8-7.700M7.300 12.500c0-3 2.300-5 5.200-5" fill="none" stroke="#b9bec2" strokeWidth="1.200" />
            <path d="M9.500 13.500v-1.300c0-1.300 1.500-2.500 3-2.500v3.800z" fill="#fff" />
          </TrayIcon>
          <TrayIcon width="17" height="14" viewBox="0 0 17 14">
            <path d="M.8 4.800h2.500L6.500 1.500v11L3.300 9.200H.8z" fill="none" stroke="#fff" strokeWidth="1.200" />
            <path d="M9 5c1 1.300 1 2.700 0 4M11.300 3.300c1.800 2.300 1.800 5.100 0 7.400M13.600 1.500c2.700 3.500 2.700 7.500 0 11" fill="none" stroke="#fff" strokeWidth="1.100" />
          </TrayIcon>
          <TrayIcon width="17" height="16" viewBox="0 0 17 16" $gap={17}>
            <path d="M1 1h15v11h-5.500L8.500 14.500 6.500 12H1zM4 4.500h9M4 7h9M4 9.400h6" fill="none" stroke="#fff" strokeWidth="1.300" />
          </TrayIcon>
          <Clock><Fit text="9:03 PM" w={42} /></Clock>
          <DesktopEdge />
        </Tray>
      </Taskbar>
    </Screen>
  );
}
